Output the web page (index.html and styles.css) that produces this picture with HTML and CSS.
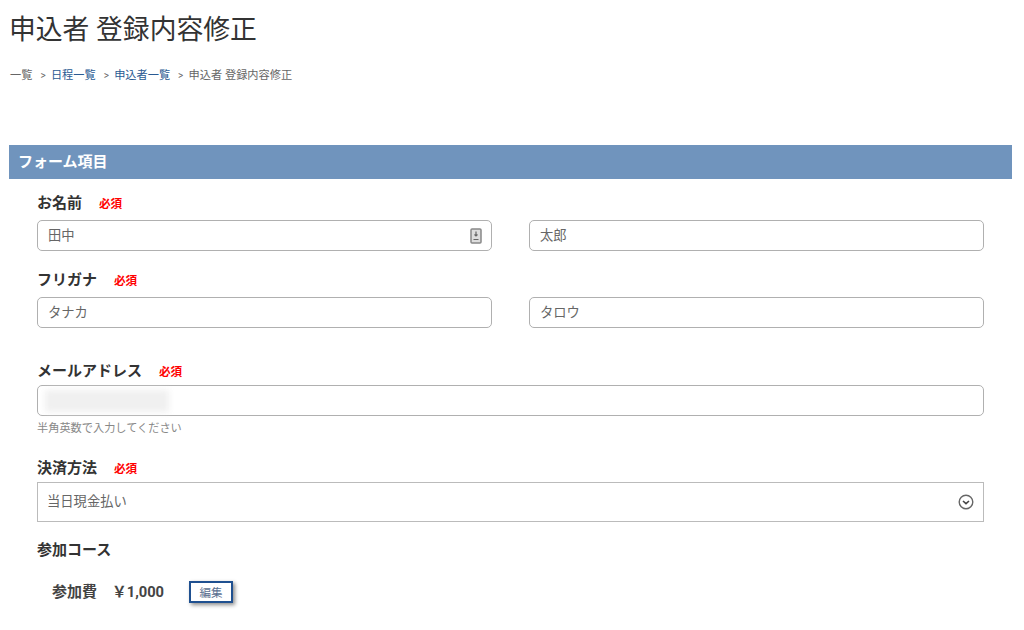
FILE: index.html
```html
<!DOCTYPE html>
<html lang="ja">
<head>
  <meta charset="UTF-8">
  <title>申込者 登録内容修正</title>
  <link rel="stylesheet" href="styles.css">
</head>
<body>
  <div class="container">
    <h1>申込者 登録内容修正</h1>
    <div class="breadcrumb">
      <span>一覧</span>
      <span class="sep">&gt;</span><a href="#">日程一覧</a>
      <span class="sep">&gt;</span><a href="#">申込者一覧</a>
      <span class="sep">&gt;</span><span>申込者 登録内容修正</span>
    </div>

    <h2 class="band">フォーム項目</h2>

    <div class="form">
      <div class="form-group name-group">
        <div class="label">お名前<span class="required">必須</span></div>
        <div class="two-col">
          <div class="input-box">
            <span class="value">田中</span>
            <svg class="autofill" width="12" height="16" viewBox="0 0 12 16">
              <rect x="1" y="1" width="10" height="14" rx="1" fill="#ddd" stroke="#888" stroke-width="1.5"/>
              <path d="M6 3.5v4.5M4.5 6.5L6 8l1.5-1.5M3.5 11.5h5" fill="none" stroke="#666" stroke-width="1.2"/>
            </svg>
          </div>
          <div class="input-box"><span class="value">太郎</span></div>
        </div>
      </div>

      <div class="form-group kana-group">
        <div class="label">フリガナ<span class="required">必須</span></div>
        <div class="two-col">
          <div class="input-box"><span class="value">タナカ</span></div>
          <div class="input-box"><span class="value">タロウ</span></div>
        </div>
      </div>

      <div class="form-group mail-group">
        <div class="label">メールアドレス<span class="required">必須</span></div>
        <div class="input-box"><span class="blurred"></span></div>
        <div class="tip">半角英数で入力してください</div>
      </div>

      <div class="form-group pay-group">
        <div class="label">決済方法<span class="required">必須</span></div>
        <div class="select-box">
          <span class="value">当日現金払い</span>
          <svg width="16" height="16" viewBox="0 0 16 16">
            <circle cx="8" cy="8" r="6.8" fill="none" stroke="#666" stroke-width="1.4"/>
            <path d="M5 7l3 2.6L11 7" fill="none" stroke="#444" stroke-width="1.6"/>
          </svg>
        </div>
      </div>

      <div class="form-group course-group">
        <div class="label">参加コース</div>
        <div class="course-row">
          <span class="course-name">参加費</span>
          <span class="course-price">￥1,000</span>
          <button class="edit-btn">編集</button>
        </div>
      </div>
    </div>
  </div>
</body>
</html>
```

FILE: styles.css
```css
* {
  box-sizing: border-box;
}
html, body {
  margin: 0;
  height: 630px;
  overflow: hidden;
  background: #fff;
}
body {
  font-family: Roboto, "Noto Sans CJK JP", sans-serif;
  color: #333;
}
.container {
  padding: 12px 12px 0 9px;
}
h1 {
  margin: 0;
  font-size: 26.8px;
  font-weight: 400;
  line-height: 36px;
  color: #333;
}
.breadcrumb {
  display: flex;
  margin: 20px 0 0 1px;
  font-size: 11.2px;
  line-height: 16px;
  color: #666;
}
.breadcrumb a {
  color: #2a5a92;
  text-decoration: none;
}
.breadcrumb .sep {
  width: 6px;
  margin: 0 4.5px 0 8px;
  font-size: 10px;
}
.band {
  margin: 61px 0 0;
  height: 34px;
  padding-left: 9px;
  background: #7094bd;
  color: #fff;
  font-size: 15px;
  font-weight: 700;
  line-height: 34px;
}
.form {
  padding: 0 28px;
}
.label {
  font-size: 15px;
  font-weight: 700;
  line-height: 20px;
  color: #333;
}
.required {
  margin-left: 17px;
  font-size: 11.6px;
  color: #f00;
}
.two-col {
  display: grid;
  grid-template-columns: 455px 455px;
  gap: 37px;
}
.input-box {
  display: flex;
  align-items: center;
  justify-content: space-between;
  height: 31px;
  margin-top: 6px;
  padding: 0 10px 3px 10px;
  border: 1px solid #b0b0b0;
  border-radius: 5px;
  background: #fff;
}
.value {
  font-size: 13.3px;
  color: #666;
}
.autofill {
  margin: 3px -1px 0 0;
}
.blurred {
  display: block;
  width: 124px;
  height: 22px;
  margin: 3px 0 0 -3px;
  background: #f0f0f0;
  filter: blur(3px);
}
.tip {
  margin-top: 5px;
  font-size: 11.2px;
  line-height: 15px;
  color: #888;
}
.select-box {
  display: flex;
  align-items: center;
  justify-content: space-between;
  height: 40px;
  margin-top: 3px;
  padding: 0 9px 0 9px;
  border: 1px solid #bbb;
}
.select-box .value {
  margin-top: -4px;
}
.name-group {
  margin-top: 14px;
}
.kana-group {
  margin-top: 19px;
}
.mail-group {
  margin-top: 33px;
}
.mail-group .input-box {
  margin-top: 3px;
}
.pay-group {
  margin-top: 22px;
}
.course-group {
  margin-top: 18px;
}
.course-row {
  display: flex;
  align-items: center;
  margin-top: 17px;
  padding-left: 15px;
  font-size: 15px;
  font-weight: 700;
  color: #444;
}
.course-price {
  margin-left: 15px;
  font-size: 14.7px;
}
.edit-btn {
  width: 44px;
  height: 22px;
  margin: 4px 0 0 25px;
  padding: 0;
  border: 2px solid #1f5090;
  background: #fff;
  color: #5a6f90;
  font-family: inherit;
  font-size: 11.5px;
  box-shadow: 2px 2px 4px rgba(0,0,0,0.45);
}
```
